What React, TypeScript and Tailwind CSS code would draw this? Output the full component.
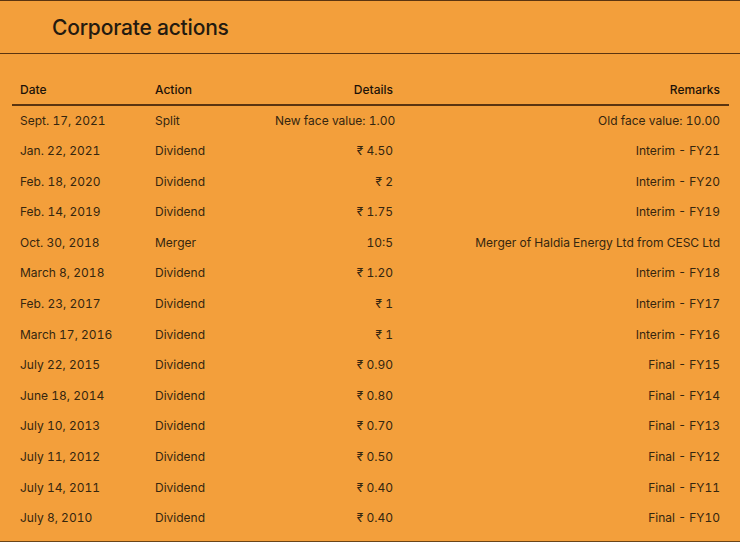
import React from "react";

const rows: [string, string, string, string][] = [
  ["Sept. 17, 2021", "Split", "New face value: 1.00", "Old face value: 10.00"],
  ["Jan. 22, 2021", "Dividend", "₹ 4.50", "Interim - FY21"],
  ["Feb. 18, 2020", "Dividend", "₹ 2", "Interim - FY20"],
  ["Feb. 14, 2019", "Dividend", "₹ 1.75", "Interim - FY19"],
  ["Oct. 30, 2018", "Merger", "10:5", "Merger of Haldia Energy Ltd from CESC Ltd"],
  ["March 8, 2018", "Dividend", "₹ 1.20", "Interim - FY18"],
  ["Feb. 23, 2017", "Dividend", "₹ 1", "Interim - FY17"],
  ["March 17, 2016", "Dividend", "₹ 1", "Interim - FY16"],
  ["July 22, 2015", "Dividend", "₹ 0.90", "Final - FY15"],
  ["June 18, 2014", "Dividend", "₹ 0.80", "Final - FY14"],
  ["July 10, 2013", "Dividend", "₹ 0.70", "Final - FY13"],
  ["July 11, 2012", "Dividend", "₹ 0.50", "Final - FY12"],
  ["July 14, 2011", "Dividend", "₹ 0.40", "Final - FY11"],
  ["July 8, 2010", "Dividend", "₹ 0.40", "Final - FY10"],
];

export default function App() {
  return (
    <div
      className="w-[740px] h-[542px] overflow-hidden bg-[#f39f3b] text-[#2a1e10]"
      style={{ fontFamily: "Inter, 'Noto Sans', sans-serif" }}
    >
      <div className="h-[54px] border-t border-b border-[#5a3410] flex items-center pl-[52px]">
        <h2 className="text-[21px] font-medium leading-none text-[#231a10] tracking-[-0.2px]">
          Corporate actions
        </h2>
      </div>
      <div className="pt-[21px] px-[12px] h-[488px] border-b border-[#6a4418]">
        <table className="w-[717px] table-fixed border-collapse text-[12px] tabular-nums">
          <colgroup>
            <col className="w-[135px]" />
            <col className="w-[120px]" />
            <col className="w-[134px]" />
            <col />
          </colgroup>
          <thead>
            <tr className="h-[30px] border-b-2 border-[#5a3410] text-[#1c1208] font-medium">
              <th className="px-2 text-left font-medium">Date</th>
              <th className="px-2 text-left font-medium">Action</th>
              <th className="px-2 text-right font-medium">Details</th>
              <th className="px-2 pr-[9px] text-right font-medium">Remarks</th>
            </tr>
          </thead>
          <tbody className="text-[#35260f]">
            {rows.map((r, i) => (
              <tr key={i} className="h-[30.62px]">
                <td className="px-2 whitespace-nowrap">{r[0]}</td>
                <td className="px-2 whitespace-nowrap">{r[1]}</td>
                <td className="px-2 text-right whitespace-nowrap">{r[2]}</td>
                <td className="px-2 pr-[9px] text-right whitespace-nowrap">{r[3]}</td>
              </tr>
            ))}
          </tbody>
        </table>
      </div>
    </div>
  );
}
